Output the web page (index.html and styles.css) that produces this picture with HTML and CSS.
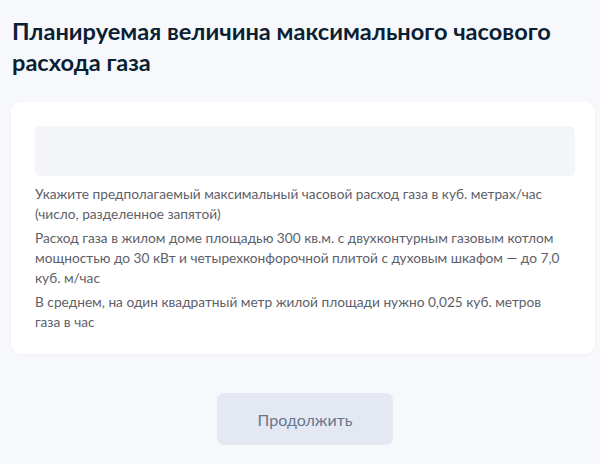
FILE: index.html
```html
<!DOCTYPE html>
<html lang="ru">
<head>
<meta charset="utf-8">
<link rel="stylesheet" href="styles.css">
</head>
<body>
<div class="page">
  <h1 class="title">Планируемая величина максимального часового расхода газа</h1>
  <div class="card">
    <div class="input"></div>
    <div class="hints">
      <p>Укажите предполагаемый максимальный часовой расход газа в куб. метрах/час (число, разделенное запятой)</p>
      <p>Расход газа в жилом доме площадью 300 кв.м. с двухконтурным газовым котлом мощностью до 30 кВт и четырехконфорочной плитой с духовым шкафом — до 7,0 куб. м/час</p>
      <p>В среднем, на один квадратный метр жилой площади нужно 0,025 куб. метров газа в час</p>
    </div>
  </div>
  <div class="actions">
    <button class="btn">Продолжить</button>
  </div>
</div>
</body>
</html>
```
FILE: styles.css
```css
html, body {
  margin: 0;
  padding: 0;
  background: #f7f8fb;
  font-family: Lato, "Open Sans", sans-serif;
}
.page {
  padding: 16px 5px 0 11px;
}
.title {
  margin: 0 0 0 1px;
  font-size: 23.6px;
  line-height: 31px;
  font-weight: 700;
  color: #0b1f33;
  width: 580px;
}
.card {
  margin-top: 24px;
  background: #ffffff;
  border-radius: 10px;
  padding: 24px 20px 22px 24px;
  box-shadow: 0 1px 3px rgba(40, 60, 100, 0.04);
}
.input {
  height: 50px;
  background: #f3f5f8;
  border-radius: 5px;
}
.hints {
  margin-top: 8px;
  padding-right: 6px;
  font-size: 13.7px;
  line-height: 20px;
  color: #5d6069;
}
.hints p {
  margin: 0 0 4px 0;
}
.hints p:last-child {
  margin-bottom: 0;
}
.actions {
  display: flex;
  justify-content: center;
  margin-top: 39px;
  padding-left: 4px;
}
.btn {
  width: 176px;
  height: 52px;
  border: none;
  border-radius: 7px;
  background: #e4e8f2;
  color: #66768c;
  font-family: Lato, "Open Sans", sans-serif;
  font-size: 16px;
}
```
